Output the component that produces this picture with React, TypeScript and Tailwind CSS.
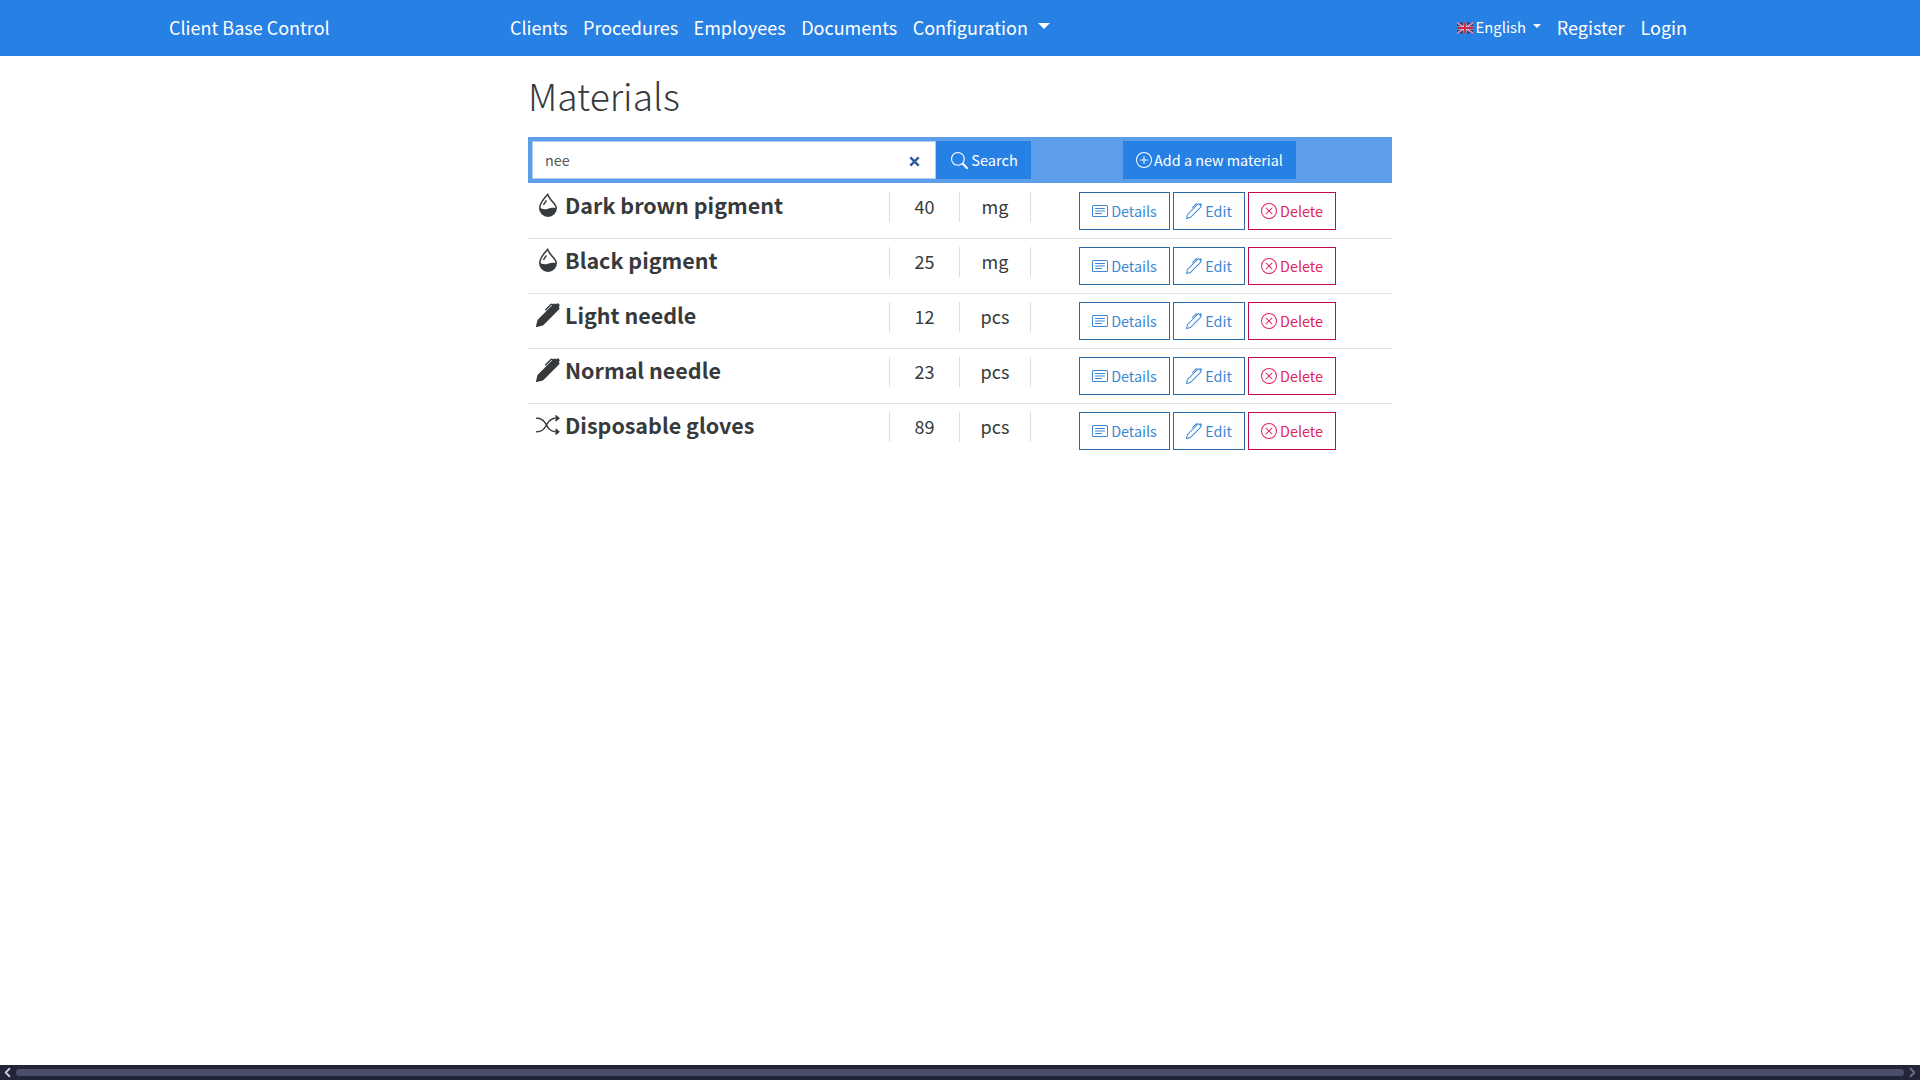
import React from "react";
import { BsDropletHalf, BsPenFill, BsShuffle, BsCardText, BsPen, BsXCircle, BsSearch, BsPlusCircle } from "react-icons/bs";
import { ChevronLeft, ChevronRight } from "lucide-react";

const font = "font-['Noto_Sans_CJK_SC','Noto_Sans',sans-serif]";

const rows = [
  { icon: BsDropletHalf, name: "Dark brown pigment", qty: "40", unit: "mg" },
  { icon: BsDropletHalf, name: "Black pigment", qty: "25", unit: "mg" },
  { icon: BsPenFill, name: "Light needle", qty: "12", unit: "pcs" },
  { icon: BsPenFill, name: "Normal needle", qty: "23", unit: "pcs" },
  { icon: BsShuffle, name: "Disposable gloves", qty: "89", unit: "pcs" },
];

function Flag() {
  return (
    <svg viewBox="0 0 60 40" className="w-[16px] h-[12px] mt-[2px]">
      <rect width="60" height="40" fill="#29337a" />
      <path d="M0 0L60 40M60 0L0 40" stroke="#e8e4ea" strokeWidth="6" />
      <path d="M0 0L60 40M60 0L0 40" stroke="#c8283f" strokeWidth="3" />
      <path d="M30 0V40M0 20H60" stroke="#f2e6ea" strokeWidth="11" />
      <path d="M30 0V40M0 20H60" stroke="#c8283f" strokeWidth="7" />
    </svg>
  );
}

function Caret({ big }: { big?: boolean }) {
  return big ? (
    <span className="ml-[10px] mb-[1px] inline-block border-x-[6px] border-x-transparent border-t-[6px] border-t-white" />
  ) : (
    <span className="ml-[4px] mb-[2px] inline-block border-x-[4px] border-x-transparent border-t-[4px] border-t-white" />
  );
}

function Action({ icon: Icon, label, red, w }: { icon: any; label: string; red?: boolean; w: string }) {
  return (
    <button
      className={`${w} h-[38px] flex items-center justify-center gap-[3px] border text-[14.4px] leading-none ${
        red ? "border-[#c30c44] text-[#e0245e]" : "border-[#2a6aa8] text-[#3b87d6]"
      }`}
    >
      <Icon className="w-[16px] h-[16px]" />
      <span>{label}</span>
    </button>
  );
}

export default function App() {
  return (
    <div className={`${font} h-screen w-full overflow-hidden bg-white flex flex-col text-[#373a3c]`}>
      <nav className="h-[56px] shrink-0 bg-[#2780e3] text-white flex items-center pb-[3px] pl-[169px] pr-[233px] text-[18px] leading-none">
        <span className="w-[341px]">Client Base Control</span>
        <div className="flex items-center gap-[15.5px]">
          <span>Clients</span>
          <span>Procedures</span>
          <span>Employees</span>
          <span>Documents</span>
          <span className="flex items-center">
            Configuration
            <Caret big />
          </span>
        </div>
        <div className="ml-auto flex items-center gap-[16px]">
          <span className="flex items-center text-[14.8px] gap-[3px] pt-[2px]">
            <Flag />
            English
            <Caret />
          </span>
          <span>Register</span>
          <span>Login</span>
        </div>
      </nav>

      <main className="flex-1 w-[864px] ml-[528px]">
        <h1 className="text-[37.2px] font-light leading-[48px] mt-[15px] mb-[18px] text-[#373a3c]">Materials</h1>
        <div className="h-[46px] bg-[#5c9fe8] flex items-center pl-[4px] text-white">
          <div className="w-[404px] h-[38px] bg-white border border-[#a9cdf3] flex items-center justify-between pl-[12px] pr-[15px] text-[14.4px] text-[#55595c]">
            <span>nee</span>
            <svg viewBox="0 0 12 12" className="w-[11px] h-[11px] mt-[2px]">
              <path d="M1.5 1.5L10.5 10.5M10.5 1.5L1.5 10.5" stroke="#2f5d9c" strokeWidth="2.8" />
            </svg>
          </div>
          <button className="w-[95px] h-[38px] bg-[#2780e3] flex items-center justify-center gap-[3px] pl-[2px] text-[14.6px] leading-none">
            <BsSearch className="w-[17px] h-[17px]" />
            <span>Search</span>
          </button>
          <button className="ml-[92px] w-[173px] h-[38px] bg-[#2780e3] flex items-center justify-center gap-[2px] text-[14.4px] leading-none">
            <BsPlusCircle className="w-[16px] h-[16px]" />
            <span>Add a new material</span>
          </button>
        </div>

        <div className="pt-[1px]">
          {rows.map((r, i) => (
            <div
              key={r.name}
              className={`h-[55px] grid grid-cols-[361px_70px_72px_1fr] ${i < rows.length - 1 ? "border-b border-[#dfe1e3]" : ""}`}
            >
              <div className="flex items-start pt-[8px] pl-[8px] gap-[5px]">
                <r.icon className="w-[24px] h-[24px] mt-[1px] text-[#373a3c]" />
                <span className="text-[21.5px] font-bold leading-[26px]">{r.name}</span>
              </div>
              <div className="mt-[8px] h-[30px] pb-[2px] border-l border-[#dcdee0] flex items-center justify-center text-[18px] leading-none">
                {r.qty}
              </div>
              <div className="mt-[8px] h-[30px] pb-[2px] border-x border-[#dcdee0] flex items-center justify-center text-[18px] leading-none">
                {r.unit}
              </div>
              <div className="pt-[8px] pl-[48px] flex items-start gap-[3px]">
                <Action icon={BsCardText} label="Details" w="w-[91px]" />
                <Action icon={BsPen} label="Edit" w="w-[72px]" />
                <Action icon={BsXCircle} label="Delete" red w="w-[88px]" />
              </div>
            </div>
          ))}
        </div>
      </main>

      <div className="h-[15px] shrink-0 bg-[#22243a] flex items-center justify-between">
        <ChevronLeft className="w-[15px] h-[15px] text-[#c8cad4]" strokeWidth={3} />
        <div className="flex-1 h-[7px] bg-[#4a4e69] rounded-sm mx-[1px]" />
        <ChevronRight className="w-[15px] h-[15px] text-[#6b6e80]" strokeWidth={3} />
      </div>
    </div>
  );
}
